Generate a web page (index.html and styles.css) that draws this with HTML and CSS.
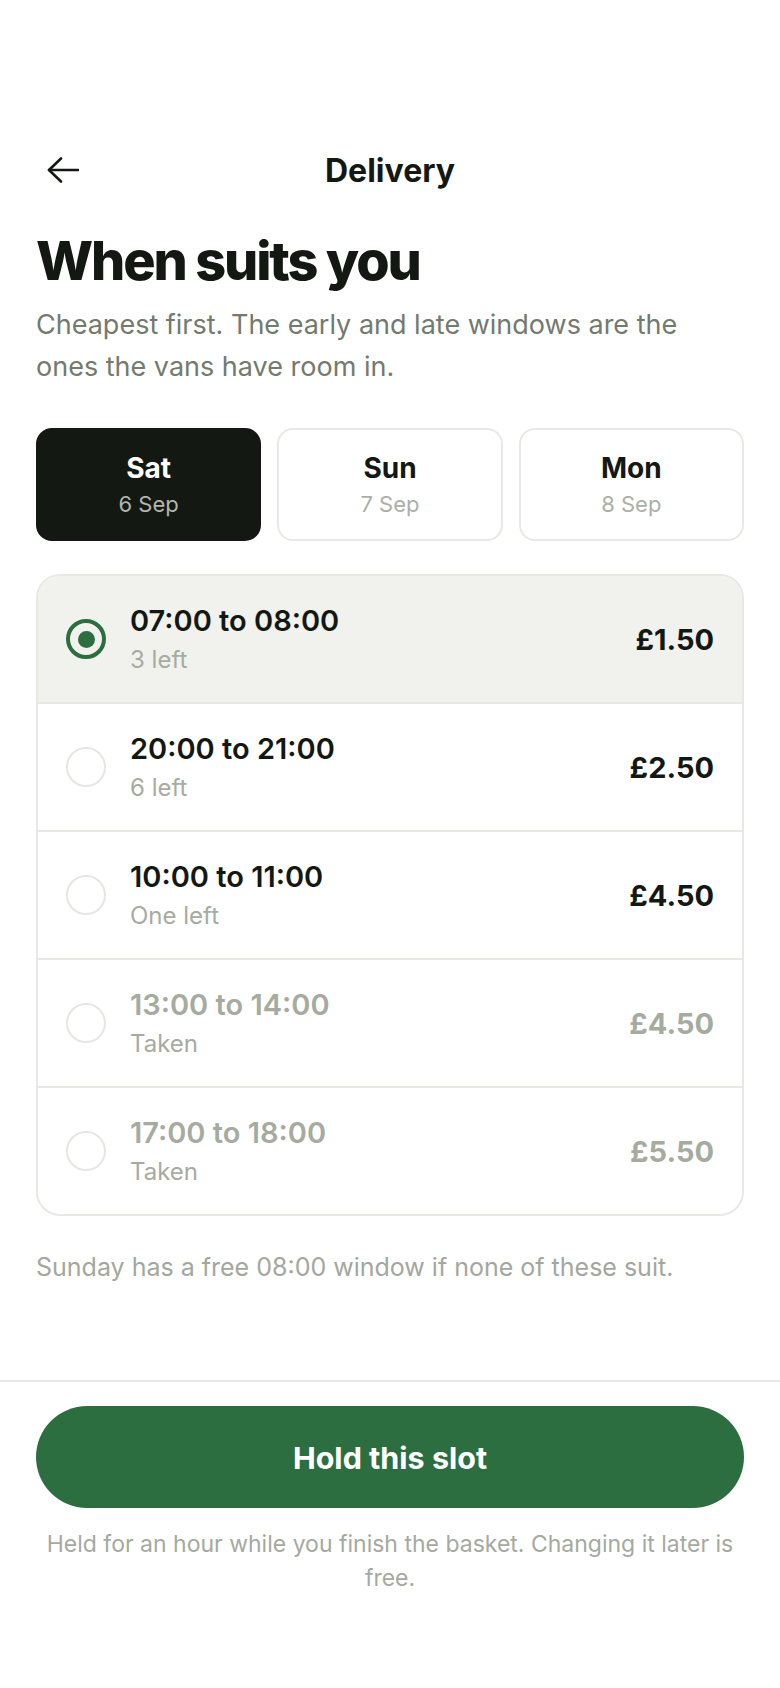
FILE: index.html
```html
<!DOCTYPE html>
<html lang="en">
<head>
    <meta charset="UTF-8">
    <meta name="viewport" content="width=device-width, initial-scale=1.0">
    <title>Delivery</title>
    <link rel="stylesheet" href="styles.css">
</head>
<body>
    <div class="page">
        <header class="topbar">
            <button class="back" aria-label="Back">
                <svg width="32" height="28" viewBox="0 0 32 28" fill="none" stroke="#141812" stroke-width="2.6" stroke-linecap="round" stroke-linejoin="round">
                    <path d="M31 14H2"/>
                    <path d="M14 2.5L2 14l12 11.5"/>
                </svg>
            </button>
            <div class="title">Delivery</div>
            <span></span>
        </header>

        <h1>When suits you</h1>
        <p class="intro">Cheapest first. The early and late windows are the ones the vans have room in.</p>

        <div class="days">
            <button class="day active">
                <span class="day-name">Sat</span>
                <span class="day-date">6 Sep</span>
            </button>
            <button class="day">
                <span class="day-name">Sun</span>
                <span class="day-date">7 Sep</span>
            </button>
            <button class="day">
                <span class="day-name">Mon</span>
                <span class="day-date">8 Sep</span>
            </button>
        </div>

        <div class="slots">
            <div class="slot selected">
                <span class="radio"></span>
                <div class="slot-info">
                    <span class="slot-time">07:00 to 08:00</span>
                    <span class="slot-left">3 left</span>
                </div>
                <span class="slot-price">£1.50</span>
            </div>
            <div class="slot">
                <span class="radio"></span>
                <div class="slot-info">
                    <span class="slot-time">20:00 to 21:00</span>
                    <span class="slot-left">6 left</span>
                </div>
                <span class="slot-price">£2.50</span>
            </div>
            <div class="slot">
                <span class="radio"></span>
                <div class="slot-info">
                    <span class="slot-time">10:00 to 11:00</span>
                    <span class="slot-left">One left</span>
                </div>
                <span class="slot-price">£4.50</span>
            </div>
            <div class="slot taken">
                <span class="radio"></span>
                <div class="slot-info">
                    <span class="slot-time">13:00 to 14:00</span>
                    <span class="slot-left">Taken</span>
                </div>
                <span class="slot-price">£4.50</span>
            </div>
            <div class="slot taken">
                <span class="radio"></span>
                <div class="slot-info">
                    <span class="slot-time">17:00 to 18:00</span>
                    <span class="slot-left">Taken</span>
                </div>
                <span class="slot-price">£5.50</span>
            </div>
        </div>

        <p class="note">Sunday has a free 08:00 window if none of these suit.</p>
    </div>

    <footer class="footer">
        <button class="hold">Hold this slot</button>
        <p class="caption">Held for an hour while you finish the basket. Changing it later is free.</p>
    </footer>
</body>
</html>
```

FILE: styles.css
```css
body {
    margin: 0;
    font-family: Inter, "Noto Sans", sans-serif;
    background: #fff;
    color: #141812;
}
button {
    font-family: inherit;
}
.page {
    padding: 142px 36px 0;
}
.topbar {
    display: grid;
    grid-template-columns: 80px 1fr 80px;
    align-items: center;
    height: 56px;
}
.back {
    background: none;
    border: none;
    padding: 0 0 0 11px;
    display: flex;
    align-items: center;
    cursor: pointer;
}
.title {
    text-align: center;
    font-size: 32px;
    font-weight: 700;
}
h1 {
    font-size: 54px;
    line-height: 56px;
    font-weight: 800;
    letter-spacing: -0.04em;
    margin: 35px 0 0;
}
.intro {
    max-width: 700px;
    font-size: 27px;
    line-height: 42px;
    color: #737a6e;
    margin: 15px 0 0;
}
.days {
    display: grid;
    grid-template-columns: repeat(3, 1fr);
    gap: 16px;
    margin-top: 40px;
}
.day {
    height: 113px;
    border: 2px solid #e8e9e4;
    border-radius: 16px;
    background: #fff;
    display: flex;
    flex-direction: column;
    align-items: center;
    justify-content: center;
    gap: 6px;
    padding: 0;
}
.day-name {
    font-size: 28px;
    line-height: 32px;
    font-weight: 700;
    color: #141812;
}
.day-date {
    font-size: 22px;
    line-height: 28px;
    color: #acafa8;
}
.day.active {
    background: #141812;
    border-color: #141812;
}
.day.active .day-name {
    color: #fff;
}
.day.active .day-date {
    color: #b3b6ae;
}
.slots {
    margin-top: 33px;
    border: 2px solid #e8e9e4;
    border-radius: 24px;
    overflow: hidden;
}
.slot {
    height: 126px;
    display: flex;
    align-items: center;
    gap: 24px;
    padding: 0 28px;
}
.slot + .slot {
    border-top: 2px solid #e8e9e4;
}
.slot.selected {
    background: #f1f2ee;
}
.radio {
    width: 40px;
    height: 40px;
    box-sizing: border-box;
    border: 2px solid #e6e7e2;
    border-radius: 50%;
    background: #fff;
    flex-shrink: 0;
    display: flex;
    align-items: center;
    justify-content: center;
}
.selected .radio {
    border: 4px solid #2d6e41;
    background: transparent;
}
.selected .radio::after {
    content: "";
    width: 17px;
    height: 17px;
    border-radius: 50%;
    background: #2d6e41;
}
.slot-info {
    flex: 1;
    display: flex;
    flex-direction: column;
    gap: 9px;
}
.slot-time {
    font-size: 29px;
    line-height: 32px;
    font-weight: 600;
    color: #141812;
}
.slot-left {
    font-size: 24px;
    line-height: 28px;
    color: #a7aba2;
}
.slot-price {
    font-size: 29px;
    font-weight: 700;
    color: #141812;
}
.taken .slot-time,
.taken .slot-price {
    color: #a6aba0;
}
.note {
    font-size: 25px;
    line-height: 32px;
    color: #a3a79e;
    margin: 35px 0 0;
}
.footer {
    margin-top: 97px;
    border-top: 2px solid #e8e9e4;
    padding: 24px 36px 0;
    text-align: center;
}
.hold {
    width: 100%;
    height: 102px;
    border: none;
    border-radius: 51px;
    background: #2d6e41;
    color: #fff;
    font-size: 30.5px;
    font-weight: 700;
    cursor: pointer;
}
.caption {
    font-size: 23px;
    line-height: 34px;
    color: #a5a99f;
    margin: 19px 0 0;
}
```
